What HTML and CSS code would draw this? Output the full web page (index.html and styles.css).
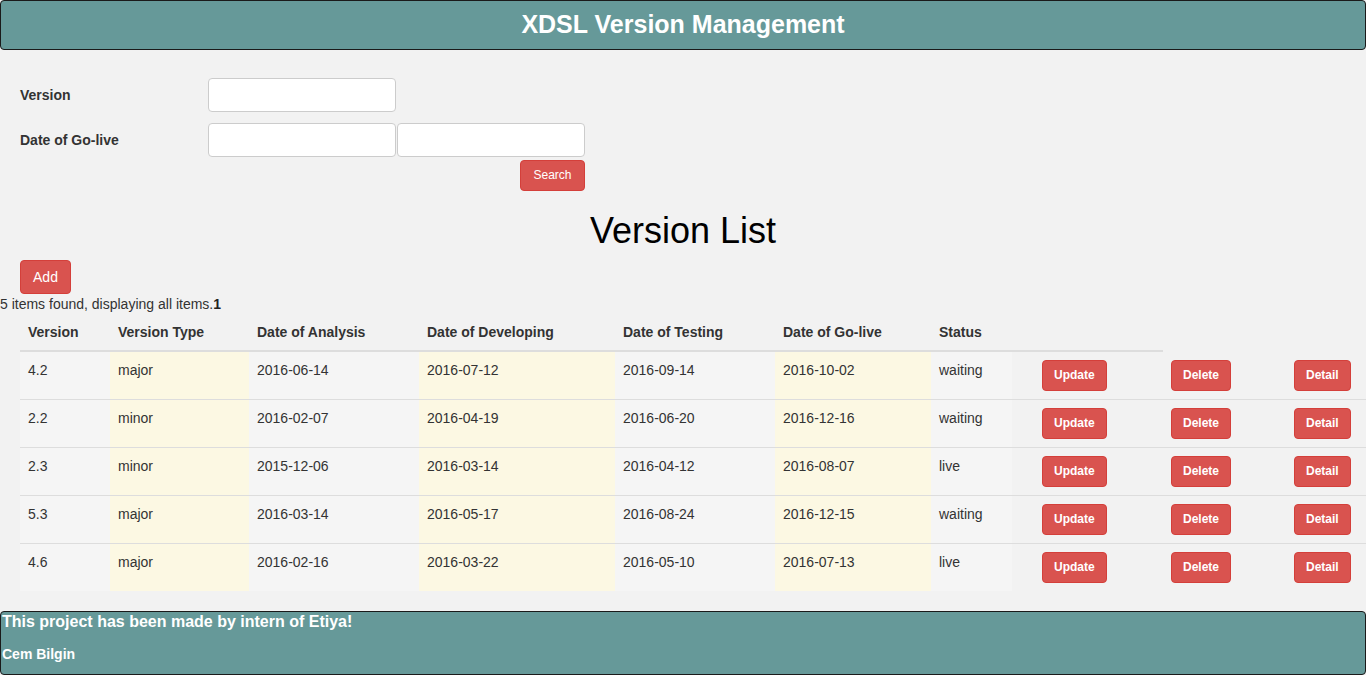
FILE: index.html
```html
<!DOCTYPE html>
<html>
<head>
<meta charset="utf-8">
<title>XDSL Version Management</title>
<link rel="stylesheet" href="styles.css">
</head>
<body>
<header class="topbar"><h1 class="topbar-title">XDSL Version Management</h1></header>

<form class="search">
  <div class="form-row">
    <label class="form-label">Version</label>
    <input class="form-input" type="text">
  </div>
  <div class="form-row">
    <label class="form-label">Date of Go-live</label>
    <input class="form-input" type="text">
    <input class="form-input form-input-second" type="text">
  </div>
  <div class="form-actions">
    <button type="button" class="btn btn-sm">Search</button>
  </div>
</form>

<h2 class="list-title">Version List</h2>
<div class="add-row"><button type="button" class="btn btn-add">Add</button></div>
<div class="count">5 items found, displaying all items.<b>1</b></div>

<table class="versions">
  <colgroup>
    <col class="c1"><col class="c2"><col class="c3"><col class="c4"><col class="c5">
    <col class="c6"><col class="c7"><col class="c8"><col class="c9"><col class="c10">
  </colgroup>
  <thead>
    <tr>
      <th>Version</th><th>Version Type</th><th>Date of Analysis</th><th>Date of Developing</th>
      <th>Date of Testing</th><th>Date of Go-live</th><th>Status</th><th></th><th class="th-partial"></th><th class="th-none"></th>
    </tr>
  </thead>
  <tbody>
    <tr>
      <td class="active">4.2</td><td class="warning">major</td><td class="active">2016-06-14</td><td class="warning">2016-07-12</td>
      <td class="active">2016-09-14</td><td class="warning">2016-10-02</td><td class="active">waiting</td>
      <td class="btn-cell"><button type="button" class="btn btn-row">Update</button></td>
      <td class="btn-cell"><button type="button" class="btn btn-row">Delete</button></td>
      <td class="btn-cell"><button type="button" class="btn btn-row">Detail</button></td>
    </tr>
    <tr>
      <td class="active">2.2</td><td class="warning">minor</td><td class="active">2016-02-07</td><td class="warning">2016-04-19</td>
      <td class="active">2016-06-20</td><td class="warning">2016-12-16</td><td class="active">waiting</td>
      <td class="btn-cell"><button type="button" class="btn btn-row">Update</button></td>
      <td class="btn-cell"><button type="button" class="btn btn-row">Delete</button></td>
      <td class="btn-cell"><button type="button" class="btn btn-row">Detail</button></td>
    </tr>
    <tr>
      <td class="active">2.3</td><td class="warning">minor</td><td class="active">2015-12-06</td><td class="warning">2016-03-14</td>
      <td class="active">2016-04-12</td><td class="warning">2016-08-07</td><td class="active">live</td>
      <td class="btn-cell"><button type="button" class="btn btn-row">Update</button></td>
      <td class="btn-cell"><button type="button" class="btn btn-row">Delete</button></td>
      <td class="btn-cell"><button type="button" class="btn btn-row">Detail</button></td>
    </tr>
    <tr>
      <td class="active">5.3</td><td class="warning">major</td><td class="active">2016-03-14</td><td class="warning">2016-05-17</td>
      <td class="active">2016-08-24</td><td class="warning">2016-12-15</td><td class="active">waiting</td>
      <td class="btn-cell"><button type="button" class="btn btn-row">Update</button></td>
      <td class="btn-cell"><button type="button" class="btn btn-row">Delete</button></td>
      <td class="btn-cell"><button type="button" class="btn btn-row">Detail</button></td>
    </tr>
    <tr>
      <td class="active">4.6</td><td class="warning">major</td><td class="active">2016-02-16</td><td class="warning">2016-03-22</td>
      <td class="active">2016-05-10</td><td class="warning">2016-07-13</td><td class="active">live</td>
      <td class="btn-cell"><button type="button" class="btn btn-row">Update</button></td>
      <td class="btn-cell"><button type="button" class="btn btn-row">Delete</button></td>
      <td class="btn-cell"><button type="button" class="btn btn-row">Detail</button></td>
    </tr>
  </tbody>
</table>

<footer class="footer">
  <div class="footer-title">This project has been made by intern of Etiya!</div>
  <div class="footer-name">Cem Bilgin</div>
</footer>
</body>
</html>
```

FILE: styles.css
```css
* { box-sizing: border-box; }

html, body {
  margin: 0;
  padding: 0;
  background: #f2f2f2;
}

body {
  font-family: "Liberation Sans", Arial, Helvetica, sans-serif;
  font-size: 14px;
  line-height: 20px;
  color: #333;
  overflow: hidden;
}

.topbar {
  height: 50px;
  background: #669999;
  border: 1px solid #1a1a1a;
  border-radius: 4px;
  display: flex;
  align-items: center;
  justify-content: center;
  padding-bottom: 3px;
}

.topbar-title {
  margin: 0;
  font-size: 25px;
  line-height: 30px;
  font-weight: bold;
  color: #fff;
}

.search {
  padding: 28px 0 0 20px;
  margin: 0;
}

.form-row {
  display: flex;
  align-items: center;
  height: 34px;
  margin-bottom: 11px;
}

.form-row + .form-row { margin-bottom: 3px; }

.form-label {
  width: 188px;
  font-weight: bold;
  color: #333;
}

.form-input {
  width: 188px;
  height: 34px;
  border: 1px solid #ccc;
  border-radius: 4px;
  background: #fff;
  margin: 0;
  padding: 6px 12px;
  font: inherit;
}

.form-input-second { margin-left: 1px; }

.form-actions {
  width: 565px;
  display: flex;
  justify-content: flex-end;
}

.btn {
  font-family: "Liberation Sans", Arial, Helvetica, sans-serif;
  background: #d9534f;
  border: 1px solid #d43f3a;
  border-radius: 4px;
  color: #fff;
  cursor: pointer;
  margin: 0;
}

.btn-sm {
  font-size: 12px;
  line-height: 17px;
  padding: 6px 12px;
  height: 31px;
  width: 65px;
}

.btn-add {
  font-size: 14px;
  line-height: 20px;
  padding: 6px 12px;
  height: 34px;
  width: 51px;
}

.btn-row {
  font-size: 12px;
  font-weight: bold;
  line-height: 17px;
  padding: 6px 11px;
  height: 31px;
}

.list-title {
  margin: 20px 0 9px;
  text-align: center;
  font-size: 36px;
  line-height: 40px;
  font-weight: normal;
  color: #000;
}

.add-row { padding-left: 20px; }

.count { line-height: 20px; }
.count b { color: #222; }

.versions {
  margin-left: 20px;
  width: 1346px;
  table-layout: fixed;
  border-collapse: separate;
  border-spacing: 0;
}

.c1 { width: 90px; }
.c2 { width: 139px; }
.c3 { width: 170px; }
.c4 { width: 196px; }
.c5 { width: 160px; }
.c6 { width: 156px; }
.c7 { width: 81px; }
.c8 { width: 129px; }
.c9 { width: 123px; }
.c10 { width: 102px; }

.versions th {
  text-align: left;
  font-weight: bold;
  color: #333;
  padding: 8px;
  line-height: 20px;
  border-bottom: 2px solid #ddd;
  white-space: nowrap;
}

.versions th.th-partial {
  border-bottom: 0;
  background: linear-gradient(#ddd, #ddd) no-repeat left bottom / 22px 2px;
}

.versions th.th-none { border-bottom: 0; }

.versions td {
  padding: 8px;
  line-height: 20px;
  vertical-align: top;
  border-top: 1px solid #ddd;
  white-space: nowrap;
}

.versions tbody tr:first-child td { border-top: 0; }

.versions td.active { background: #f5f5f5; }
.versions td.warning { background: #fcf8e3; }

.versions td.btn-cell {
  padding: 8px 0 8px 30px;
}

.footer {
  margin-top: 20px;
  height: 64px;
  background: #669999;
  border: 1px solid #1a1a1a;
  border-radius: 4px;
  color: #fff;
  padding: 0 0 0 1px;
  font-weight: bold;
}

.footer-title {
  font-size: 16px;
  line-height: 20px;
}

.footer-name {
  margin-top: 12px;
  font-size: 14px;
  line-height: 20px;
}
```
